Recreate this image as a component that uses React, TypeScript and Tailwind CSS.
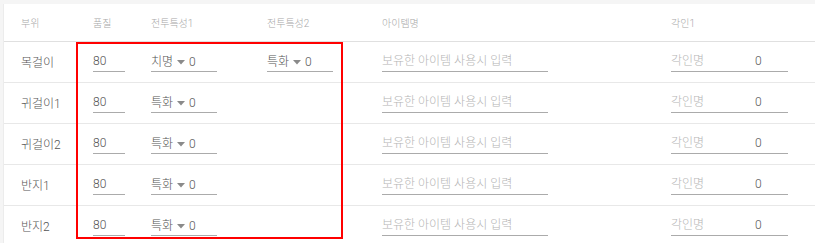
import React from "react";

const rows = [
  { part: "목걸이", q: "80", s1: "치명", s2: "특화" },
  { part: "귀걸이1", q: "80", s1: "특화" },
  { part: "귀걸이2", q: "80", s1: "특화" },
  { part: "반지1", q: "80", s1: "특화" },
  { part: "반지2", q: "80", s1: "특화" },
];

function Caret() {
  return (
    <svg width="8" height="5" viewBox="0 0 8 5" className="mx-[4px] mt-[1px]">
      <path d="M0 0 L8 0 L4 4.5 Z" fill="#8a8a8a" />
    </svg>
  );
}

function StatSelect({ name }: { name: string }) {
  return (
    <div className="flex items-center w-[66px] h-[20px] border-b border-[#ababab] text-[12px] text-[#555]">
      <span>{name}</span>
      <Caret />
      <span>0</span>
    </div>
  );
}

export default function App() {
  return (
    <div
      className="w-[815px] h-[243px] bg-[#f5f5f5] pl-[3px] pt-[4px] overflow-hidden font-light"
      style={{ fontFamily: "Roboto, 'Noto Sans CJK KR', sans-serif" }}
    >
      <div className="relative bg-white h-full border-l border-[#ececec]">
        <div className="grid grid-cols-[72px_58px_116px_115px_289px_1fr] pl-[17px] pt-[2px] h-[38px] items-center border-b border-[#e0e0e0] text-[10px] text-[#a8a8a8]">
          <div>부위</div>
          <div>품질</div>
          <div>전투특성1</div>
          <div>전투특성2</div>
          <div>아이템명</div>
          <div>각인1</div>
        </div>
        {rows.map((r, i) => (
          <div
            key={i}
            className="grid grid-cols-[72px_58px_116px_115px_289px_1fr] pl-[17px] h-[41px] items-center border-b border-[#e8e8e8]"
          >
            <div className="text-[12px] text-[#555] pt-[2px]">{r.part}</div>
            <div>
              <div className="w-[32px] h-[20px] border-b border-[#ababab] text-[12px] text-[#555] leading-[19px]">
                {r.q}
              </div>
            </div>
            <div>
              <StatSelect name={r.s1} />
            </div>
            <div>{r.s2 ? <StatSelect name={r.s2} /> : null}</div>
            <div>
              <div className="w-[166px] h-[20px] border-b border-[#ababab] text-[12px] text-[#b5b5b5] leading-[19px]">
                보유한 아이템 사용시 입력
              </div>
            </div>
            <div>
              <div className="flex w-[117px] h-[20px] border-b border-[#ababab] text-[12px] leading-[19px]">
                <span className="text-[#b5b5b5] w-[84px]">각인명</span>
                <span className="text-[#555]">0</span>
              </div>
            </div>
          </div>
        ))}
        <div className="absolute left-[72px] top-[38px] w-[267px] h-[197px] border-2 border-[#ff0000] pointer-events-none" />
      </div>
    </div>
  );
}
